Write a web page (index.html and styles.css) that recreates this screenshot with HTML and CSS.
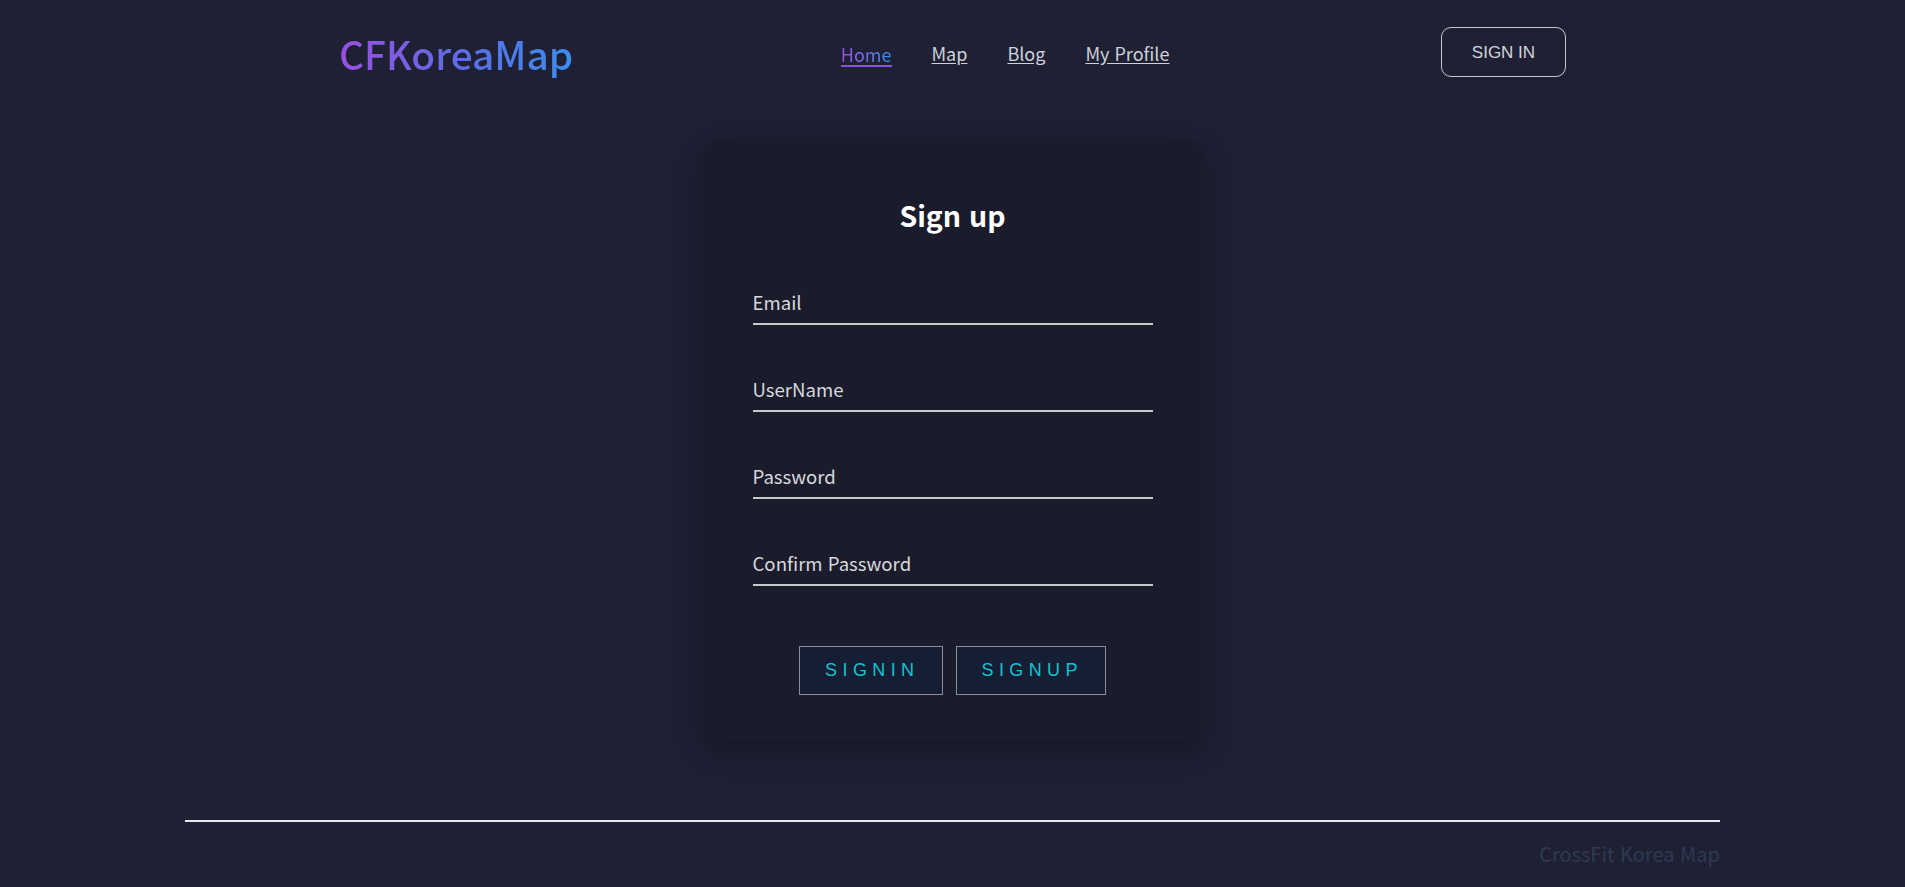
FILE: index.html
```html
<!DOCTYPE html>
<html lang="ko">
<head>
<meta charset="utf-8">
<title>CFKoreaMap</title>
<link rel="stylesheet" href="styles.css">
</head>
<body>
<header class="header">
  <a class="logo" href="#">CFKoreaMap</a>
  <nav class="nav">
    <a class="nav-link active" href="#">Home</a>
    <a class="nav-link" href="#">Map</a>
    <a class="nav-link" href="#">Blog</a>
    <a class="nav-link" href="#">My Profile</a>
  </nav>
  <button class="signin-btn">SIGN IN</button>
</header>
<main class="main">
  <section class="card">
    <h1 class="card-title">Sign up</h1>
    <form class="form">
      <label class="field"><span class="field-label">Email</span></label>
      <label class="field"><span class="field-label">UserName</span></label>
      <label class="field"><span class="field-label">Password</span></label>
      <label class="field"><span class="field-label">Confirm Password</span></label>
      <div class="actions">
        <button type="button" class="action-btn">SIGNIN</button>
        <button type="button" class="action-btn">SIGNUP</button>
      </div>
    </form>
  </section>
</main>
<footer class="footer">
  <div class="footer-line"></div>
  <p class="footer-text">CrossFit Korea Map</p>
</footer>
</body>
</html>
```

FILE: styles.css
```css
* { box-sizing: border-box; }
html, body { margin: 0; padding: 0; }
body {
  background: #1f2034;
  font-family: "Noto Sans CJK KR", "Noto Sans", sans-serif;
  color: #d8d8d8;
  min-height: 887px;
}
.header {
  width: 1227px;
  margin: 0 auto;
  padding-top: 27px;
  height: 77px;
  display: flex;
  justify-content: space-between;
  align-items: center;
}
.logo {
  font-size: 38.8px;
  font-weight: 500;
  line-height: 50px;
  text-decoration: none;
  background: linear-gradient(90deg, #9a4fe0 0%, #5a6ee6 55%, #3a8ff0 100%);
  -webkit-background-clip: text;
  background-clip: text;
  color: transparent;
  margin-top: 2px;
}
.nav {
  display: flex;
  gap: 40px;
  margin-top: 4px;
  margin-left: -4px;
}
.nav-link {
  color: #cdd1da;
  font-size: 18px;
  line-height: 24px;
  text-decoration: underline;
  text-underline-offset: 2px;
}
.nav-link.active {
  text-decoration: none;
  background: linear-gradient(90deg, #9a4fe0, #3a8ff0);
  -webkit-background-clip: text;
  background-clip: text;
  color: transparent;
  border-bottom: 2px solid #8a4fe6;
  line-height: 22px;
  margin-top: 2px;
}
.signin-btn {
  width: 125px;
  height: 50px;
  border: 1px solid #c8c8d0;
  border-radius: 10px;
  background: transparent;
  color: #d0d4dc;
  font-family: "Liberation Sans", Arial, sans-serif;
  font-size: 17px;
  padding-top: 2px;
}
.main {
  display: flex;
  justify-content: center;
  padding-top: 65px;
}
.card {
  width: 500px;
  background: #1b1c2b;
  border-radius: 12px;
  box-shadow: 0 10px 30px rgba(10, 10, 20, 0.45);
  padding: 53px 50px 46px;
}
.card-title {
  margin: 0;
  text-align: center;
  font-size: 28.5px;
  font-weight: 700;
  color: #ffffff;
  line-height: 40px;
}
.form {
  margin-top: 52px;
  display: flex;
  flex-direction: column;
  gap: 49px;
}
.field {
  display: block;
  border-bottom: 2px solid #c8c8cc;
  padding-bottom: 6px;
}
.field-label {
  display: block;
  font-size: 18.6px;
  line-height: 30px;
  color: #d6d8de;
}
.actions {
  display: flex;
  justify-content: center;
  gap: 13px;
  margin-top: 11px;
}
.action-btn {
  height: 49px;
  padding: 0 22px 0 25px;
  background: #161e33;
  border: 1px solid #8a8e98;
  color: #12c2d2;
  font-family: "Liberation Sans", Arial, sans-serif;
  font-size: 18px;
  letter-spacing: 5.4px;
}
.footer {
  width: 1535px;
  margin: 79px auto 0;
}
.footer-line {
  height: 2px;
  background: #e8e8ec;
}
.footer-text {
  margin: 18px 0 0;
  text-align: right;
  font-size: 20px;
  line-height: 28px;
  color: #2d3a52;
}
```
